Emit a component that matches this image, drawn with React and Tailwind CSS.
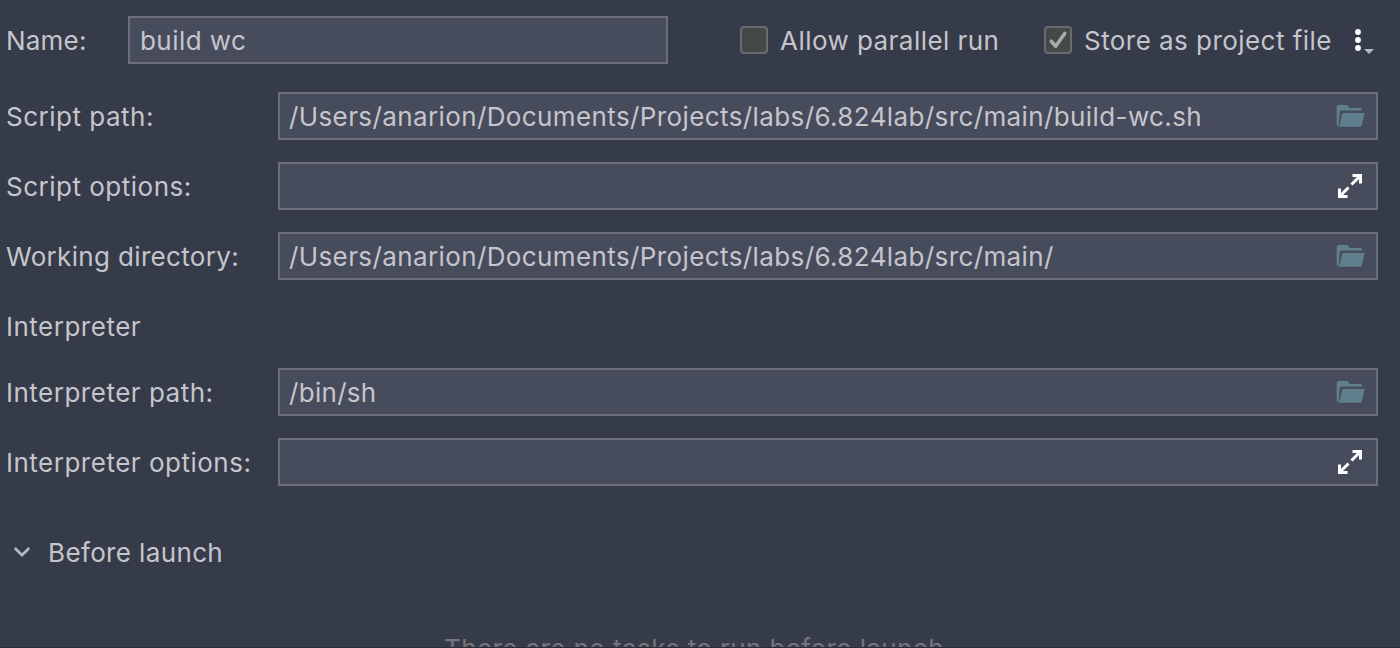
function FolderIcon() {
  return (
    <svg className="h-8 w-8 shrink-0" viewBox="0 0 32 32" fill="#5f7f8c">
      <path d="M4.500 26.500C3.400 26.200 2.700 25.400 2.700 24.300V7.200C2.700 5.900 3.500 5 4.800 5h7.400c.9 0 1.500.4 2 1.100l1.300 1.900h11c.9 0 1.400.6 1.400 1.400v1.100H7.600c-1 0-1.600.6-1.800 1.500L4.900 22z" />
      <path d="M8.600 13H30.600L27.900 25c-.3 1.200-1 1.800-2.200 1.800H5z" />
    </svg>
  );
}

function ExpandIcon() {
  return (
    <svg className="h-8 w-8 shrink-0" viewBox="0 0 32 32" fill="none" stroke="#fff" strokeWidth="3">
      <path d="M18.500 5.500H26.500V13.500M26 6L17.500 14.500M5.500 18.500V26.500H13.500M6 26L14.500 17.500" />
    </svg>
  );
}

function Field({ label, value, icon, labelSpacing = "tracking-[0.5px]", spacing = "tracking-[0.39px]" }) {
  return (
    <div className="flex h-12 items-center">
      <label className={`w-[278px] shrink-0 pt-0.5 pl-1.5 ${labelSpacing}`}>{label}</label>
      <div className={`flex h-12 w-[1100px] items-center justify-between border-2 border-[#6c6e78] bg-[#474c5c] pr-2.5 pl-[9px] ${spacing}`}>
        <span className="pt-0.5">{value}</span>
        {icon === "folder" ? <FolderIcon /> : <ExpandIcon />}
      </div>
    </div>
  );
}

export default function App() {
  return (
    <div className="flex h-[648px] w-[1400px] flex-col overflow-hidden border-b border-[#292b3a] bg-[#353b49] pt-4 font-['Inter',sans-serif] text-[26px] leading-8 tracking-[0.45px] whitespace-pre text-[#c5c5cb]">
      <div className="flex h-12 shrink-0 items-center">
        <label className="w-32 pt-0.5 pl-1.5 tracking-[0.2px]">Name:</label>
        <div className="flex h-12 w-[540px] items-center border-2 border-[#6c6e78] bg-[#474c5c] pt-0.5 pl-2.5">build wc</div>
        <div className="ml-[72px] flex w-[304px] items-center gap-3">
          <span className="h-7 w-7 rounded-[4px] border-2 border-[#6a6c6b] bg-[#434849]" />
          <span className="pt-0.5">Allow parallel run</span>
        </div>
        <div className="flex w-[308px] items-center gap-3">
          <span className="h-7 w-7 shrink-0 rounded-[4px] border-2 border-[#6a6c6b] bg-[#434849]">
            <svg className="h-6 w-6" viewBox="0 0 24 24" fill="none" stroke="#a9a9a9" strokeWidth="3.600" strokeLinecap="round" strokeLinejoin="round">
              <path d="M5.300 13.200L9.700 18.300L18.700 5.500" />
            </svg>
          </span>
          <span className="pt-0.5">Store as project file</span>
        </div>
        <svg className="h-8 w-8" viewBox="0 0 32 32">
          <g fill="#fff">
            <circle cx="6" cy="8" r="2.900" />
            <circle cx="6" cy="16" r="2.900" />
            <circle cx="6" cy="24" r="2.900" />
          </g>
          <path d="M12 25H22L17 30z" fill="#adbdc5" />
        </svg>
      </div>
      <div className="mt-7 flex shrink-0 flex-col gap-[22px]">
        <Field label="Script path:" value="/Users/anarion/Documents/Projects/labs/6.824lab/src/main/build-wc.sh" icon="folder" />
        <Field label="Script options:" value="" icon="expand" />
        <Field label="Working directory:" labelSpacing="tracking-[0.34px]" value="/Users/anarion/Documents/Projects/labs/6.824lab/src/main/" icon="folder" />
      </div>
      <div className="mt-[31px] h-8 shrink-0 pl-1.5 tracking-[0.5px]">Interpreter</div>
      <div className="mt-[25px] flex shrink-0 flex-col gap-[22px]">
        <Field label="Interpreter path:" value="/bin/sh" icon="folder" spacing="tracking-[0.3px]" />
        <Field label="Interpreter options:" value="" icon="expand" />
      </div>
      <div className="mt-[50px] flex h-8 shrink-0 items-center">
        <svg className="ml-3 mr-4 h-5 w-5" viewBox="0 0 20 20" fill="none" stroke="#adbdc5" strokeWidth="2.700">
          <path d="M2.800 6L10 13.200L17.200 6" />
        </svg>
        <span className="pt-0.5 tracking-[0.37px]">Before launch</span>
      </div>
      <div className="mt-[65px] h-8 shrink-0 pl-[444px] tracking-[0.4px] text-[#75757a]">There are no tasks to run before launch</div>
    </div>
  );
}
